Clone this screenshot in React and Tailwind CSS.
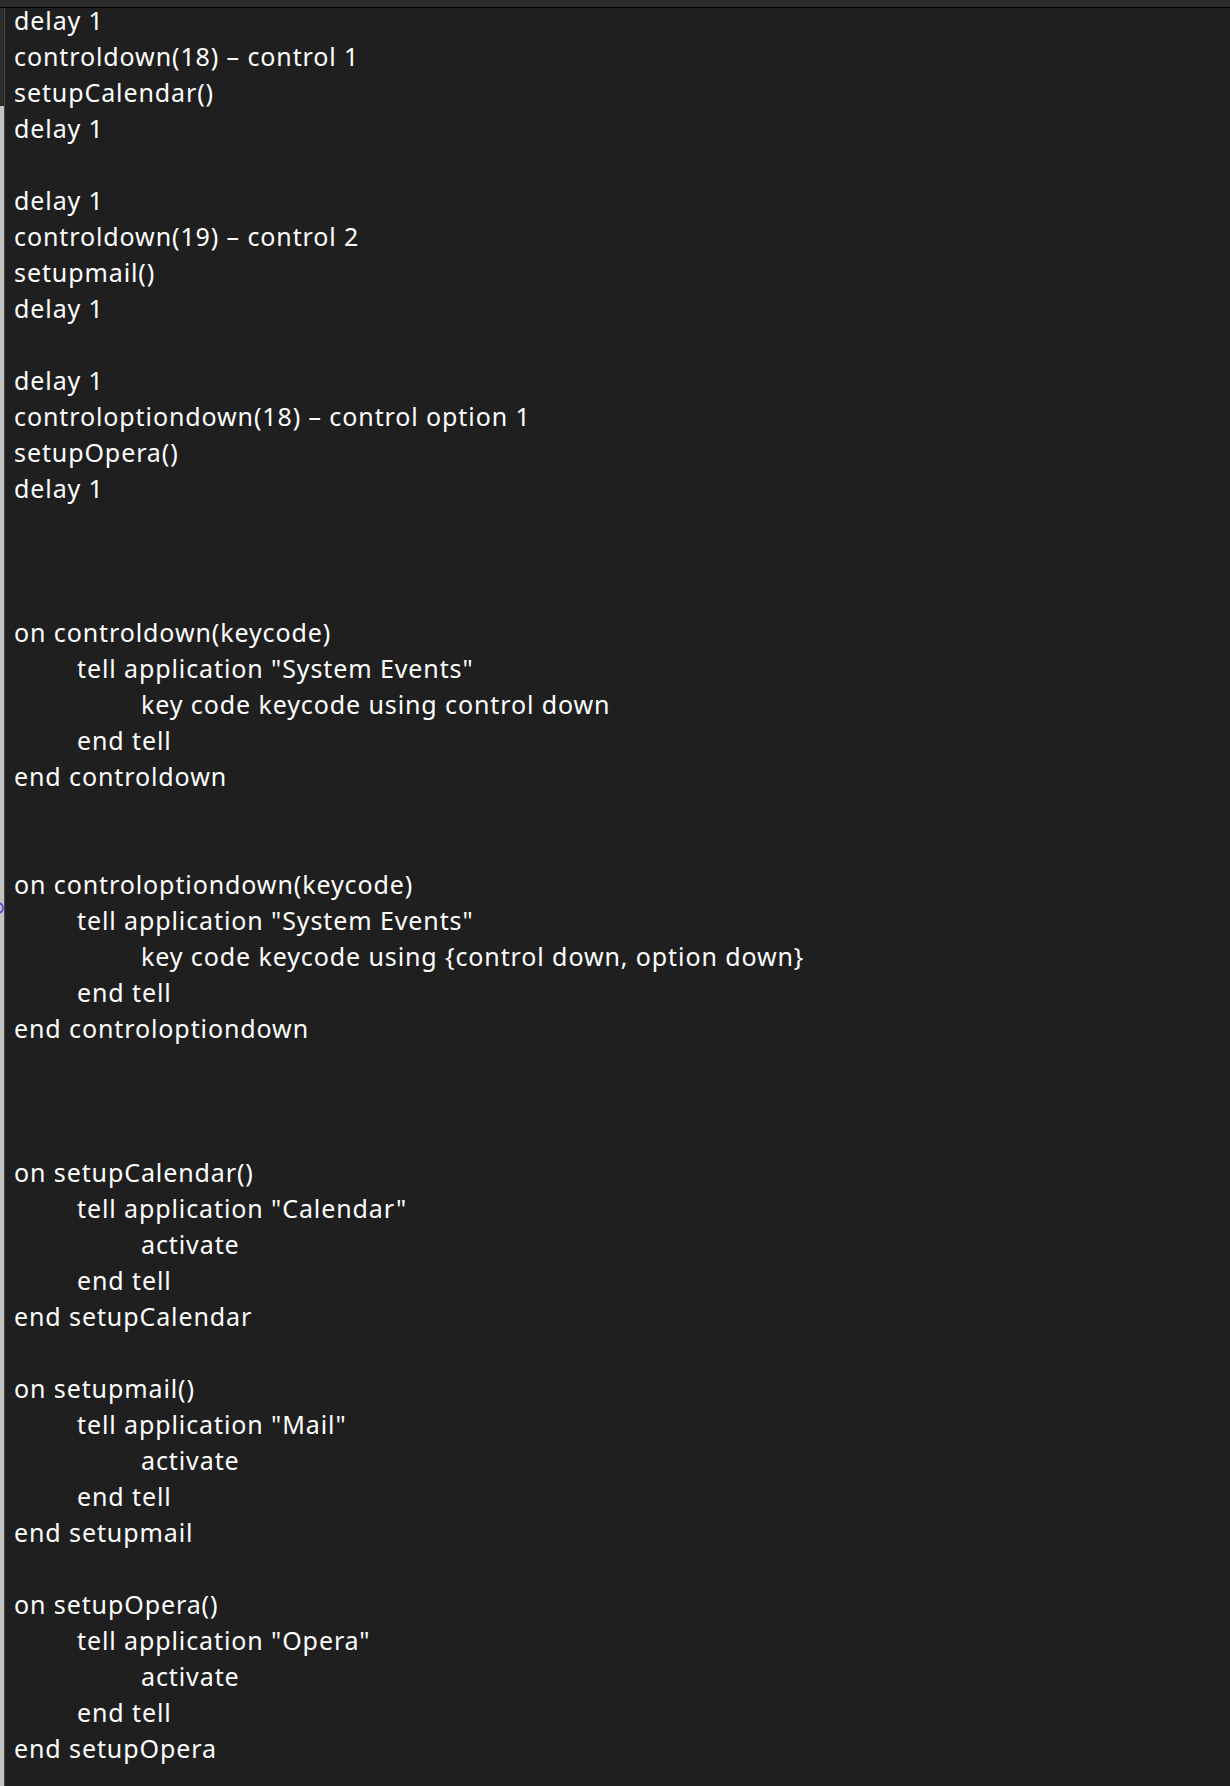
import React from "react";

const lines = [
  [0, "delay 1"],
  [0, "controldown(18) – control 1"],
  [0, "setupCalendar()"],
  [0, "delay 1"],
  [0, ""],
  [0, "delay 1"],
  [0, "controldown(19) – control 2"],
  [0, "setupmail()"],
  [0, "delay 1"],
  [0, ""],
  [0, "delay 1"],
  [0, "controloptiondown(18) – control option 1"],
  [0, "setupOpera()"],
  [0, "delay 1"],
  [0, ""],
  [0, ""],
  [0, ""],
  [0, "on controldown(keycode)"],
  [1, 'tell application "System Events"'],
  [2, "key code keycode using control down"],
  [1, "end tell"],
  [0, "end controldown"],
  [0, ""],
  [0, ""],
  [0, "on controloptiondown(keycode)"],
  [1, 'tell application "System Events"'],
  [2, "key code keycode using {control down, option down}"],
  [1, "end tell"],
  [0, "end controloptiondown"],
  [0, ""],
  [0, ""],
  [0, ""],
  [0, "on setupCalendar()"],
  [1, 'tell application "Calendar"'],
  [2, "activate"],
  [1, "end tell"],
  [0, "end setupCalendar"],
  [0, ""],
  [0, "on setupmail()"],
  [1, 'tell application "Mail"'],
  [2, "activate"],
  [1, "end tell"],
  [0, "end setupmail"],
  [0, ""],
  [0, "on setupOpera()"],
  [1, 'tell application "Opera"'],
  [2, "activate"],
  [1, "end tell"],
  [0, "end setupOpera"],
];

const indentClass = ["pl-0", "pl-[63px]", "pl-[127px]"];

export default function App() {
  return (
    <div className="w-[1230px] h-[1786px] bg-[#1f1f1f] overflow-hidden flex flex-col">
      <div className="h-[7px] bg-[#2b2b2b] border-b border-black shrink-0 box-content"></div>
      <div className="flex flex-1 min-h-0">
        <div className="w-[4px] shrink-0 flex flex-col relative">
          <div className="h-[98px] bg-[#2b2b2b]"></div>
          <div className="flex-1 bg-[#c4c4c4]"></div>
          <svg
            className="absolute left-0 top-[893px]"
            width="4"
            height="14"
            viewBox="0 0 4 14"
          >
            <path
              d="M-3 2 C2 2 3 5 3 7 C3 9 2 12 -3 12"
              fill="none"
              stroke="#5b3bd6"
              strokeWidth="1.5"
            />
          </svg>
        </div>
        <div className="w-px shrink-0 bg-[#474747]"></div>
        <div
          className="flex-1 pl-[9px] -mt-[6px] text-white text-[25px] leading-[36px] tracking-[0.9px] whitespace-pre"
          style={{ fontFamily: '"Noto Sans", "Noto Sans CJK JP", sans-serif' }}
        >
          {lines.map(([lvl, t], i) => (
            <div key={i} className={"h-[36px] " + indentClass[lvl]}>
              {t}
            </div>
          ))}
        </div>
      </div>
    </div>
  );
}
